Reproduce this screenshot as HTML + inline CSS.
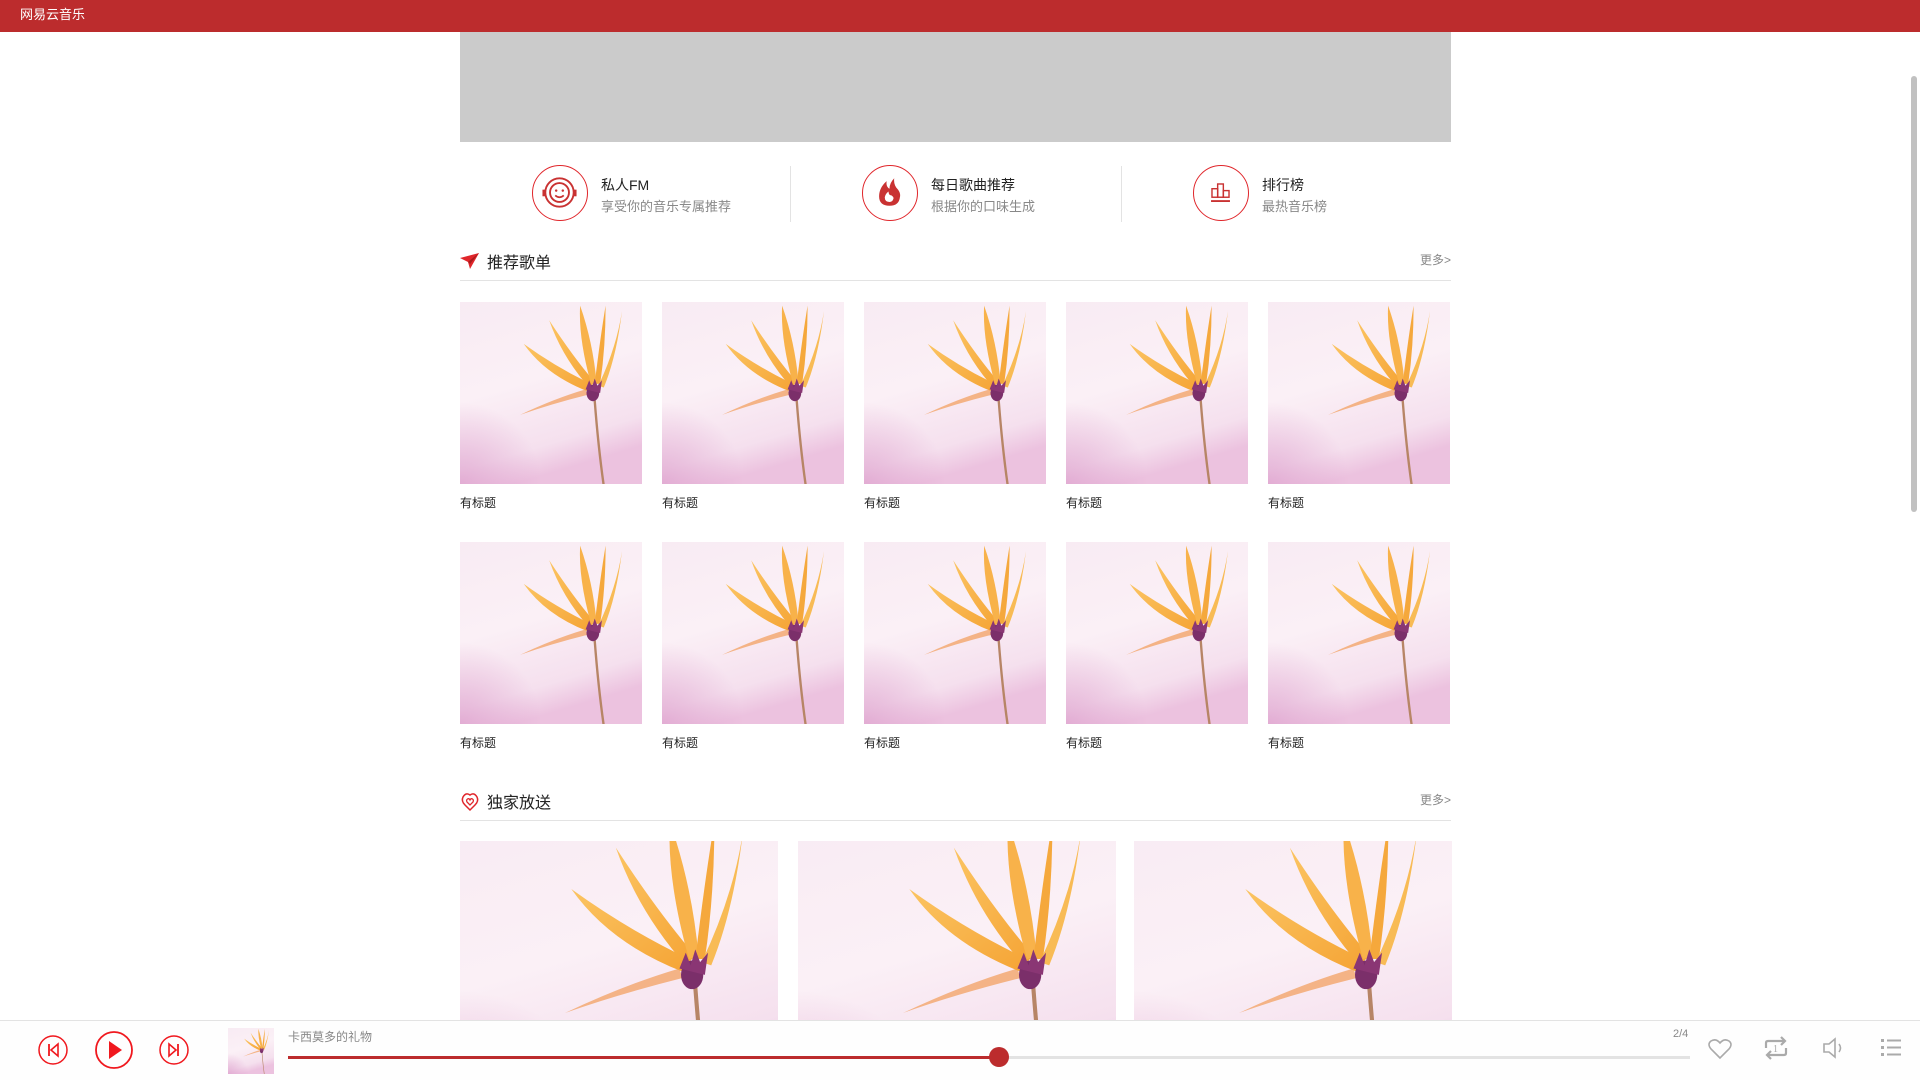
<!DOCTYPE html>
<html><head><meta charset="utf-8">
<style>
*{margin:0;padding:0;box-sizing:border-box}
html,body{width:1920px;height:1080px;overflow:hidden;background:#fff;font-family:"Liberation Sans","Noto Sans CJK SC",sans-serif}
.top{position:absolute;left:0;top:0;width:1920px;height:32px;background:#bc2c2d;color:#fff;font-size:13px;line-height:30px;padding-left:20px}
.banner{position:absolute;left:460px;top:32px;width:991px;height:110px;background:#cbcbcb}
.feat{position:absolute;top:164px;height:58px;width:330px}
.feat .c{position:absolute;left:72px;top:1px;width:56px;height:56px;border:1.5px solid #e0262b;border-radius:50%}
.feat .t1{position:absolute;left:141px;top:11px;font-size:14px;color:#222}
.feat .t2{position:absolute;left:141px;top:32px;font-size:13px;color:#888}
.dv{position:absolute;top:166px;width:1px;height:56px;background:#e3e3e3}
.sec{position:absolute;left:460px;width:991px;height:30px;border-bottom:1px solid #e3e3e3}
.sec .h{position:absolute;left:27px;top:-2px;font-size:16px;color:#222}
.sec .m{position:absolute;right:0;top:0;font-size:12px;color:#888}
.card{position:absolute;width:182px}
.card svg{display:block;width:182px;height:182px}
.card .l{font-size:12px;color:#222;margin-top:10px}
.wide{position:absolute;top:841px;width:318px;height:179px;overflow:hidden}
.wide svg{width:318px;height:179px;display:block}
.player{position:absolute;left:0;top:1020px;width:1920px;height:60px;background:#fefefe;border-top:1px solid #e3e3e3}
.sb{position:absolute;left:1911px;top:76px;width:6px;height:436px;background:#c1c1c1;border-radius:3px}
</style></head><body>
<svg width="0" height="0" style="position:absolute">
<defs>
<linearGradient id="bg" x1="0" y1="0" x2="0.3" y2="1"><stop offset="0" stop-color="#f8ebf3"/><stop offset="0.5" stop-color="#fbf0f6"/><stop offset="0.85" stop-color="#f5e0ee"/><stop offset="1" stop-color="#ecc2df"/></linearGradient>
<radialGradient id="bl" cx="0" cy="1" r="0.45"><stop offset="0" stop-color="#dc9ccb" stop-opacity=".7"/><stop offset="1" stop-color="#dc9ccb" stop-opacity="0"/></radialGradient>
<linearGradient id="pt" x1="0" y1="0" x2="1" y2="1"><stop offset="0" stop-color="#fbc462"/><stop offset="1" stop-color="#f5a435"/></linearGradient>
<symbol id="fl" viewBox="0 0 100 100">
<rect width="100" height="100" fill="url(#bg)"/>
<rect width="100" height="100" fill="url(#bl)"/>
<path d="M74 54 Q76 80 79 101" stroke="#b78566" stroke-width="1.3" fill="none"/>
<path d="M70 51 Q50 56 33 62 Q52 53 69 48Z" fill="#f2a56a" opacity=".8"/>
<path d="M70 49 Q47 40 35 23 Q53 36 72 45Z" fill="url(#pt)"/>
<path d="M71 47 Q56 30 49 10 Q62 30 74 44Z" fill="url(#pt)"/>
<path d="M72 45 Q65 20 66 2 Q73 22 75 44Z" fill="#f8b24a"/>
<path d="M74 45 Q77 20 80 2 Q80 25 77 45Z" fill="#f5a83c"/>
<path d="M76 46 Q86 25 89 5 Q86 30 79 47Z" fill="#f8bb55"/>
<ellipse cx="73" cy="50" rx="3.5" ry="4.5" fill="#7b2f6a"/>
<path d="M69 48 L71 43 L72.5 47 L74 42 L75.5 46 L78 43 L77 50 Z" fill="#8a3674"/>
</symbol>
</defs></svg>

<div class="top">网易云音乐</div>
<div class="banner"></div>

<div class="feat" style="left:460px"><div class="c"><svg width="53" height="53" viewBox="0 0 56 56"><circle cx="28" cy="28" r="15" fill="none" stroke="#c93232" stroke-width="2"/><circle cx="28" cy="28" r="10" fill="none" stroke="#c93232" stroke-width="2"/><circle cx="24.5" cy="26" r="1.3" fill="#c93232"/><circle cx="31.5" cy="26" r="1.3" fill="#c93232"/><path d="M23.5 31 Q28 35 32.5 31" stroke="#c93232" stroke-width="1.8" fill="none"/><rect x="10" y="25" width="3" height="7" fill="#c93232"/><rect x="43" y="25" width="3" height="7" fill="#c93232"/></svg></div><div class="t1">私人FM</div><div class="t2">享受你的音乐专属推荐</div></div>
<div class="dv" style="left:790px"></div>
<div class="feat" style="left:790px"><div class="c"><svg width="53" height="53" viewBox="0 0 56 56"><path d="M28 42 Q17 42 17 32 Q17 23 25 16 Q24 22 28 24 Q28 18 33 13 Q32 20 37 25 Q40 29 39 33 Q38 42 28 42Z" fill="#c93232"/><path d="M28 38 Q23 38 23 33 Q24 29 27 27 Q27 31 30 31 Q33 33 32 35 Q31 38 28 38Z" fill="#fff"/></svg></div><div class="t1">每日歌曲推荐</div><div class="t2">根据你的口味生成</div></div>
<div class="dv" style="left:1121px"></div>
<div class="feat" style="left:1121px"><div class="c"><svg width="53" height="53" viewBox="0 0 56 56" fill="none" stroke="#c93232" stroke-width="1.5"><rect x="19" y="24" width="6" height="9"/><rect x="25" y="19" width="6" height="14"/><rect x="31" y="26" width="6" height="7"/><line x1="18" y1="37" x2="38" y2="37" stroke-width="2"/></svg></div><div class="t1">排行榜</div><div class="t2">最热音乐榜</div></div>

<div class="sec" style="top:251px"><svg style="position:absolute;left:0;top:2px" width="20" height="16" viewBox="0 0 20 16"><path d="M0 5 L19 0 L10 16 L8 9Z" fill="#e0262b"/><path d="M8 9 L19 0 L10 11Z" fill="#a81c1c"/></svg><div class="h">推荐歌单</div><div class="m">更多&gt;</div></div>

<div class="card" style="left:460px;top:302px"><svg><use href="#fl"/></svg><div class="l">有标题</div></div>
<div class="card" style="left:662px;top:302px"><svg><use href="#fl"/></svg><div class="l">有标题</div></div>
<div class="card" style="left:864px;top:302px"><svg><use href="#fl"/></svg><div class="l">有标题</div></div>
<div class="card" style="left:1066px;top:302px"><svg><use href="#fl"/></svg><div class="l">有标题</div></div>
<div class="card" style="left:1268px;top:302px"><svg><use href="#fl"/></svg><div class="l">有标题</div></div>
<div class="card" style="left:460px;top:542px"><svg><use href="#fl"/></svg><div class="l">有标题</div></div>
<div class="card" style="left:662px;top:542px"><svg><use href="#fl"/></svg><div class="l">有标题</div></div>
<div class="card" style="left:864px;top:542px"><svg><use href="#fl"/></svg><div class="l">有标题</div></div>
<div class="card" style="left:1066px;top:542px"><svg><use href="#fl"/></svg><div class="l">有标题</div></div>
<div class="card" style="left:1268px;top:542px"><svg><use href="#fl"/></svg><div class="l">有标题</div></div>

<div class="sec" style="top:791px"><svg style="position:absolute;left:0;top:1px" width="20" height="20" viewBox="0 0 20 20"><path d="M10 18 L5 13 Q1 9 3 5 Q6 0 10 3 Q14 0 17 5 Q19 9 15 13Z" fill="none" stroke="#e0262b" stroke-width="1.5"/><path d="M10 13 L7 10 Q6 8 7.5 7 Q9 6 10 8 Q11 6 12.5 7 Q14 8 13 10Z" fill="none" stroke="#e0262b" stroke-width="1.3"/></svg><div class="h">独家放送</div><div class="m">更多&gt;</div></div>

<div class="wide" style="left:460px"><svg viewBox="0 7.9 100 56.3" preserveAspectRatio="none"><use href="#fl" width="100" height="100"/></svg></div>
<div class="wide" style="left:798px"><svg viewBox="0 7.9 100 56.3" preserveAspectRatio="none"><use href="#fl" width="100" height="100"/></svg></div>
<div class="wide" style="left:1134px"><svg viewBox="0 7.9 100 56.3" preserveAspectRatio="none"><use href="#fl" width="100" height="100"/></svg></div>

<div class="sb"></div>

<div class="player">
<svg style="position:absolute;left:37px;top:13px" width="32" height="32" viewBox="0 0 32 32"><circle cx="16" cy="16" r="14" fill="none" stroke="#f0181e" stroke-width="1.5"/><line x1="12" y1="10" x2="12" y2="22" stroke="#f0181e" stroke-width="1.8"/><path d="M21 10 L14 16 L21 22Z" fill="none" stroke="#f0181e" stroke-width="1.6"/></svg>
<svg style="position:absolute;left:94px;top:9px" width="40" height="40" viewBox="0 0 40 40"><circle cx="20" cy="20" r="18" fill="none" stroke="#f0181e" stroke-width="1.8"/><path d="M15 11 L28 20 L15 29Z" fill="#f0181e"/></svg>
<svg style="position:absolute;left:158px;top:13px" width="32" height="32" viewBox="0 0 32 32"><circle cx="16" cy="16" r="14" fill="none" stroke="#f0181e" stroke-width="1.5"/><line x1="20" y1="10" x2="20" y2="22" stroke="#f0181e" stroke-width="1.8"/><path d="M11 10 L18 16 L11 22Z" fill="none" stroke="#f0181e" stroke-width="1.6"/></svg>
<svg style="position:absolute;left:228px;top:7px" width="46" height="46" viewBox="0 0 100 100" preserveAspectRatio="xMidYMid slice"><use href="#fl" width="100" height="100"/></svg>
<div style="position:absolute;left:288px;top:7px;font-size:12px;color:#888">卡西莫多的礼物</div>
<div style="position:absolute;left:1673px;top:7px;font-size:11px;color:#888">2/4</div>
<div style="position:absolute;left:288px;top:35px;width:1402px;height:3px;background:#e3e3e3"></div>
<div style="position:absolute;left:288px;top:35px;width:711px;height:3px;background:#bc2c2d"></div>
<div style="position:absolute;left:989px;top:26px;width:20px;height:20px;border-radius:50%;background:#bc2c2d"></div>
<svg style="position:absolute;left:1707px;top:16px" width="26" height="24" viewBox="0 0 26 24"><path d="M13 21 L4 12 Q0 7 4 4 Q9 1 13 6 Q17 1 22 4 Q26 7 22 12Z" fill="none" stroke="#aaa" stroke-width="1.6"/></svg>
<svg style="position:absolute;left:1762px;top:13px" width="28" height="28" viewBox="0 0 28 28" fill="none" stroke="#aaa" stroke-width="2.2"><path d="M4 14 V9 Q4 7 6 7 H22"/><path d="M19 3 L23 7 L19 11"/><path d="M24 14 V19 Q24 21 22 21 H6"/><path d="M9 17 L5 21 L9 25"/><text x="11" y="18" font-size="10" fill="#aaa" stroke="none" font-family="Liberation Serif">1</text></svg>
<svg style="position:absolute;left:1821px;top:14px" width="26" height="26" viewBox="0 0 26 26" fill="none" stroke="#aaa" stroke-width="1.6"><path d="M3 9 H8 L14 4 V22 L8 17 H3Z"/><path d="M18 9 Q21 13 18 17"/></svg>
<svg style="position:absolute;left:1880px;top:15px" width="22" height="22" viewBox="0 0 22 22" fill="#aaa"><rect x="1" y="3" width="3" height="3"/><rect x="7" y="3.5" width="14" height="2"/><rect x="1" y="10" width="3" height="3"/><rect x="7" y="10.5" width="14" height="2"/><rect x="1" y="17" width="3" height="3"/><rect x="7" y="17.5" width="14" height="2"/></svg>
</div>
</body></html>
